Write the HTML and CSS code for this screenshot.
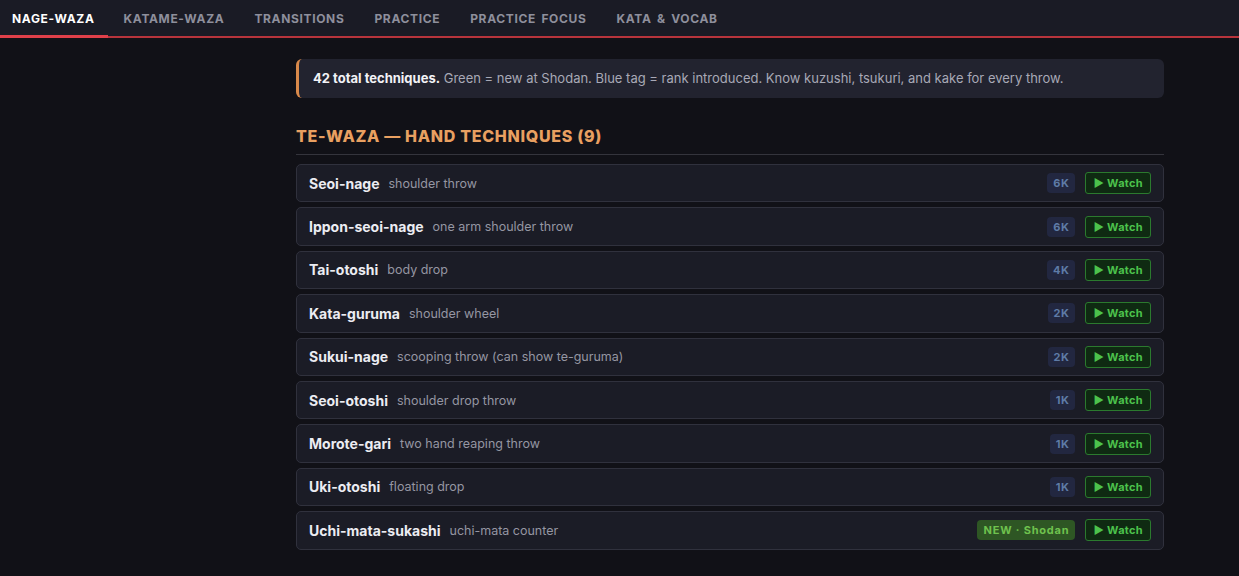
FILE: index.html
```html
<!DOCTYPE html>
<html lang="en">

<head>
    <meta charset="UTF-8">
    <meta name="viewport" content="width=device-width, initial-scale=1.0">
    <title>Judo Curriculum</title>
    <link rel="stylesheet" href="styles.css">
</head>

<body>
    <!-- Tabs -->
    <nav class="tabs">
        <a class="tab active">Nage-waza</a>
        <a class="tab">Katame-waza</a>
        <a class="tab">Transitions</a>
        <a class="tab">Practice</a>
        <a class="tab">Practice Focus</a>
        <a class="tab">Kata &amp; Vocab</a>
    </nav>

    <main class="content">
        <div class="note">
            <strong>42 total techniques.</strong> Green = new at Shodan. Blue tag = rank introduced. Know kuzushi, tsukuri, and kake for every throw.
        </div>

        <h2 class="group-title">Te-waza — Hand Techniques (9)</h2>

        <ul class="tech-list">
            <li class="tech">
                <span class="name">Seoi-nage</span><span class="desc">shoulder throw</span>
                <span class="rank">6K</span><button class="watch">▶ Watch</button>
            </li>
            <li class="tech">
                <span class="name">Ippon-seoi-nage</span><span class="desc">one arm shoulder throw</span>
                <span class="rank">6K</span><button class="watch">▶ Watch</button>
            </li>
            <li class="tech">
                <span class="name">Tai-otoshi</span><span class="desc">body drop</span>
                <span class="rank">4K</span><button class="watch">▶ Watch</button>
            </li>
            <li class="tech">
                <span class="name">Kata-guruma</span><span class="desc">shoulder wheel</span>
                <span class="rank">2K</span><button class="watch">▶ Watch</button>
            </li>
            <li class="tech">
                <span class="name">Sukui-nage</span><span class="desc">scooping throw (can show te-guruma)</span>
                <span class="rank">2K</span><button class="watch">▶ Watch</button>
            </li>
            <li class="tech">
                <span class="name">Seoi-otoshi</span><span class="desc">shoulder drop throw</span>
                <span class="rank">1K</span><button class="watch">▶ Watch</button>
            </li>
            <li class="tech">
                <span class="name">Morote-gari</span><span class="desc">two hand reaping throw</span>
                <span class="rank">1K</span><button class="watch">▶ Watch</button>
            </li>
            <li class="tech">
                <span class="name">Uki-otoshi</span><span class="desc">floating drop</span>
                <span class="rank">1K</span><button class="watch">▶ Watch</button>
            </li>
            <li class="tech">
                <span class="name">Uchi-mata-sukashi</span><span class="desc">uchi-mata counter</span>
                <span class="rank new">NEW · Shodan</span><button class="watch">▶ Watch</button>
            </li>
        </ul>
    </main>
</body>

</html>
```

FILE: styles.css
```css
body {
    font-family: Inter, "Noto Sans", sans-serif;
    background-color: #111117;
    color: #e6e6ec;
    margin: 0;
}

.tabs {
    display: flex;
    background-color: #1a1b25;
    border-bottom: 2px solid #b8343c;
    height: 36px;
}

.tab {
    display: flex;
    align-items: center;
    padding: 1px 14px 0 16px;
    font-size: 12px;
    font-weight: 700;
    letter-spacing: 0.65px;
    word-spacing: 2px;
    text-transform: uppercase;
    color: #8e8f9c;
    cursor: pointer;
    border-bottom: 3px solid transparent;
    margin-bottom: -2px;
}

.tab.active {
    color: #ffffff;
    border-bottom-color: #e0404a;
    padding-left: 12px;
    padding-right: 13px;
}

.content {
    width: 868px;
    margin-left: 296px;
    padding-top: 21px;
}

.note {
    background-color: #22232f;
    border-left: 3px solid #d9894a;
    border-radius: 6px;
    padding: 11px 16px 12px 14px;
    font-size: 13px;
    color: #a8a9b6;
}

.note strong {
    color: #f2f2f6;
}

.group-title {
    color: #e9a061;
    font-size: 16px;
    font-weight: 800;
    letter-spacing: 0.7px;
    text-transform: uppercase;
    margin: 28px 0 9px;
    padding-bottom: 8px;
    border-bottom: 1px solid #34343c;
}

.tech-list {
    list-style-type: none;
    margin: 0;
    padding: 0;
}

.tech {
    display: flex;
    align-items: center;
    height: 36.4px;
    margin-bottom: 5px;
    padding: 0 12px;
    background-color: #1b1c26;
    border: 1px solid #30313d;
    border-radius: 5px;
}

.name {
    font-size: 14px;
    font-weight: 700;
    color: #ececf2;
}

.desc {
    margin-left: 9px;
    font-size: 12.5px;
    color: #9596a2;
    flex: 1;
}

.rank {
    background-color: #222740;
    color: #5e7ba6;
    font-size: 11px;
    font-weight: 700;
    letter-spacing: 0.5px;
    padding: 3px 6px;
    border-radius: 4px;
}

.rank.new {
    background-color: #2e5624;
    color: #6fc24e;
    letter-spacing: 0.8px;
}

.watch {
    margin-left: 10px;
    background-color: #0f2a12;
    color: #4cc24c;
    border: 1px solid #2b7a2e;
    border-radius: 3px;
    padding: 3px 7px;
    font-family: inherit;
    font-size: 11px;
    font-weight: 700;
    letter-spacing: 0.3px;
    cursor: pointer;
}
```
